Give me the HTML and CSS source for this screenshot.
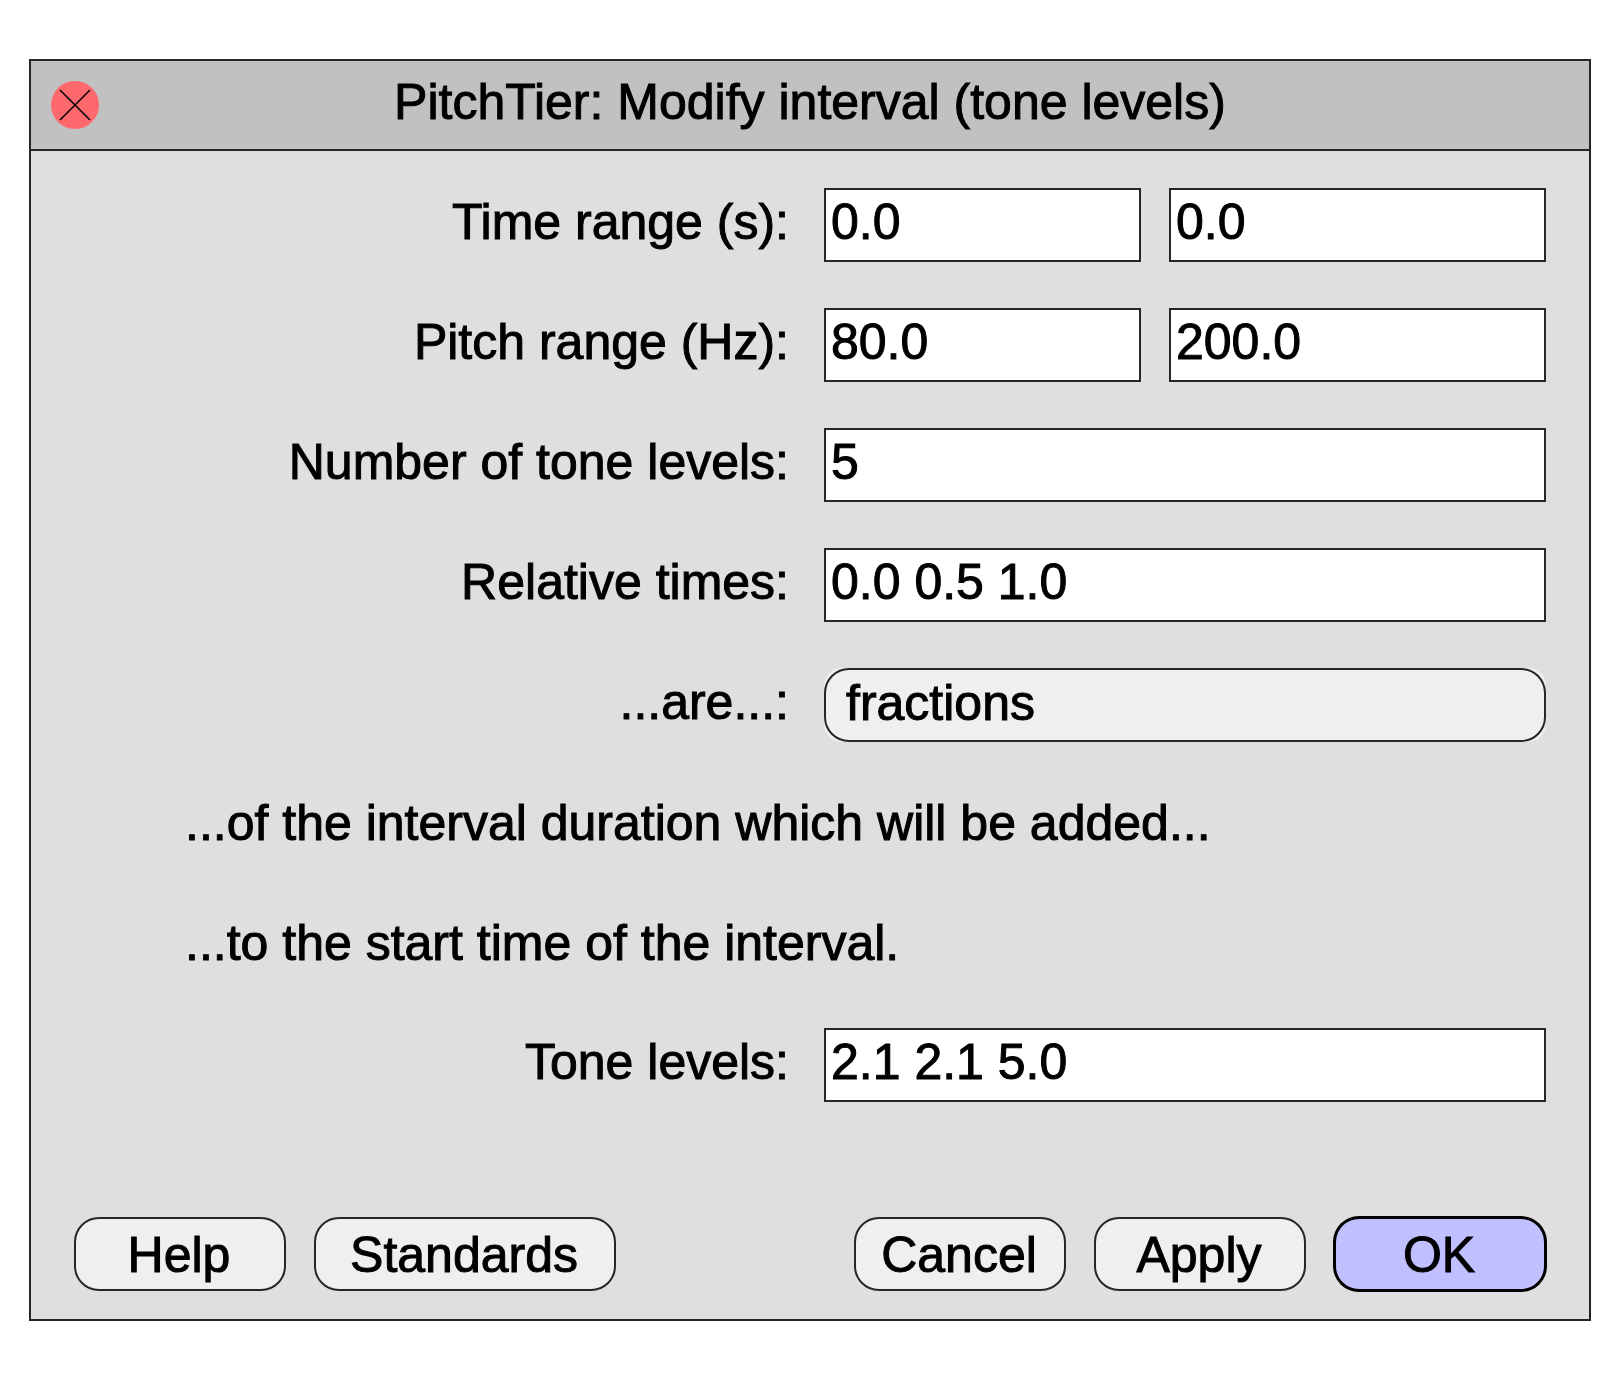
FILE: index.html
```html
<!DOCTYPE html>
<html lang="en">
<head>
<meta charset="utf-8">
<meta name="viewport" content="width=device-width, initial-scale=1">
<title>PitchTier: Modify interval (tone levels)</title>
<link rel="stylesheet" href="styles.css">
</head>
<body>
<main class="page">
  <form class="dialog" aria-labelledby="dialog-title">
    <header class="titlebar">
      <button class="close" type="button" aria-label="Close">
        <svg class="close-icon" viewBox="0 0 48 48" aria-hidden="true">
          <circle cx="24" cy="24" r="24" fill="#ff696e"/>
          <path d="M9 9L39 39M39 9L9 39" fill="none" stroke="#000" stroke-width="1.5"/>
        </svg>
      </button>
      <h1 class="title" id="dialog-title">PitchTier: Modify interval (tone levels)</h1>
    </header>
    <div class="content">
      <div class="rows">
        <div class="row">
          <label class="label" for="time-from">Time range (s):</label>
          <div class="pair">
            <input class="field" id="time-from" type="text" value="0.0">
            <input class="field" type="text" value="0.0" aria-label="Time range end (s)">
          </div>
        </div>
        <div class="row">
          <label class="label" for="pitch-from">Pitch range (Hz):</label>
          <div class="pair">
            <input class="field" id="pitch-from" type="text" value="80.0">
            <input class="field" type="text" value="200.0" aria-label="Pitch range end (Hz)">
          </div>
        </div>
        <div class="row">
          <label class="label" for="level-count">Number of tone levels:</label>
          <input class="field" id="level-count" type="text" value="5">
        </div>
        <div class="row">
          <label class="label" for="times">Relative times:</label>
          <input class="field" id="times" type="text" value="0.0 0.5 1.0">
        </div>
        <div class="row">
          <label class="label" for="unit">...are...:</label>
          <div class="menu-back">
            <select class="menu" id="unit">
              <option selected>fractions</option>
            </select>
          </div>
        </div>
        <p class="note">...of the interval duration which will be added...</p>
        <p class="note">...to the start time of the interval.</p>
        <div class="row">
          <label class="label" for="levels">Tone levels:</label>
          <input class="field" id="levels" type="text" value="2.1 2.1 5.0">
        </div>
      </div>
      <footer class="actions">
        <button class="button" type="button">Help</button>
        <button class="button button-wide" type="button">Standards</button>
        <span class="spacer"></span>
        <button class="button" type="button">Cancel</button>
        <button class="button" type="button">Apply</button>
        <button class="button button-default" type="submit">OK</button>
      </footer>
    </div>
  </form>
</main>
</body>
</html>
```
FILE: styles.css
```css
*,
*::before,
*::after {
  box-sizing: border-box;
}

:root {
  --line: #262626;
  --panel: #dfdfdf;
  --bar: #c1c1c1;
  --button: #efefef;
  --accent: #c0bfff;
  --control-height: 74px;
}

body {
  margin: 0;
  background: #fff;
  color: #000;
  font: 50px/64px "Liberation Sans", Arial, sans-serif;
  -webkit-text-stroke: 1px #000;
}

input,
select,
button {
  margin: 0;
  color: inherit;
  font: inherit;
  -webkit-text-stroke: inherit;
}

.page {
  padding: 59px 29px;
}

.dialog {
  border: 2px solid var(--line);
  background: var(--panel);
}

.titlebar {
  display: grid;
  grid-template-columns: 48px minmax(0, 1fr) 48px;
  align-items: center;
  padding: 0 20px;
  border-bottom: 2px solid var(--line);
  background: var(--bar);
}

.close {
  display: block;
  width: 48px;
  height: 48px;
  padding: 0;
  border: 0;
  border-radius: 50%;
  background: none;
}

.close-icon {
  display: block;
  width: 100%;
  height: 100%;
}

.title {
  margin: 0;
  padding: 9px 0 15px;
  font-size: 50px;
  font-weight: 400;
  text-align: center;
}

.content {
  padding: 37px 43px 28px;
}

.rows {
  display: flex;
  flex-direction: column;
  gap: 46px;
}

.row {
  display: grid;
  grid-template-columns: minmax(0, 715fr) minmax(0, 722fr);
  column-gap: 35px;
}

.label {
  padding: 2px 0 8px;
  text-align: right;
}

.pair {
  display: grid;
  grid-template-columns: minmax(0, 317fr) minmax(0, 377fr);
  column-gap: 28px;
}

.field {
  width: 100%;
  height: var(--control-height);
  padding: 0 5px 6px;
  border: 2px solid var(--line);
  border-radius: 0;
  background: #fff;
}

/* The fill is rounded less than the outline, so it shows at the corners. */
.menu-back {
  border-radius: 18px;
  background: var(--button);
}

.menu {
  display: block;
  width: 100%;
  height: var(--control-height);
  padding: 0 20px 4px;
  border: 2px solid var(--line);
  border-radius: 25px;
  background: none;
  appearance: none;
}

.note {
  margin: 0;
  padding: 3px 0 7px 111px;
}

.actions {
  display: flex;
  gap: 28px;
  margin-top: 115px;
}

.spacer {
  flex: 1;
}

.button {
  width: 212px;
  height: var(--control-height);
  padding: 2px 2px 0 0;
  border: 2px solid var(--line);
  border-radius: 25px;
  background: var(--button);
}

.button-wide {
  width: 302px;
}

.button-default {
  border-color: #000;
  background: var(--accent);
  box-shadow: 0 0 0 1px #000;
}
```
